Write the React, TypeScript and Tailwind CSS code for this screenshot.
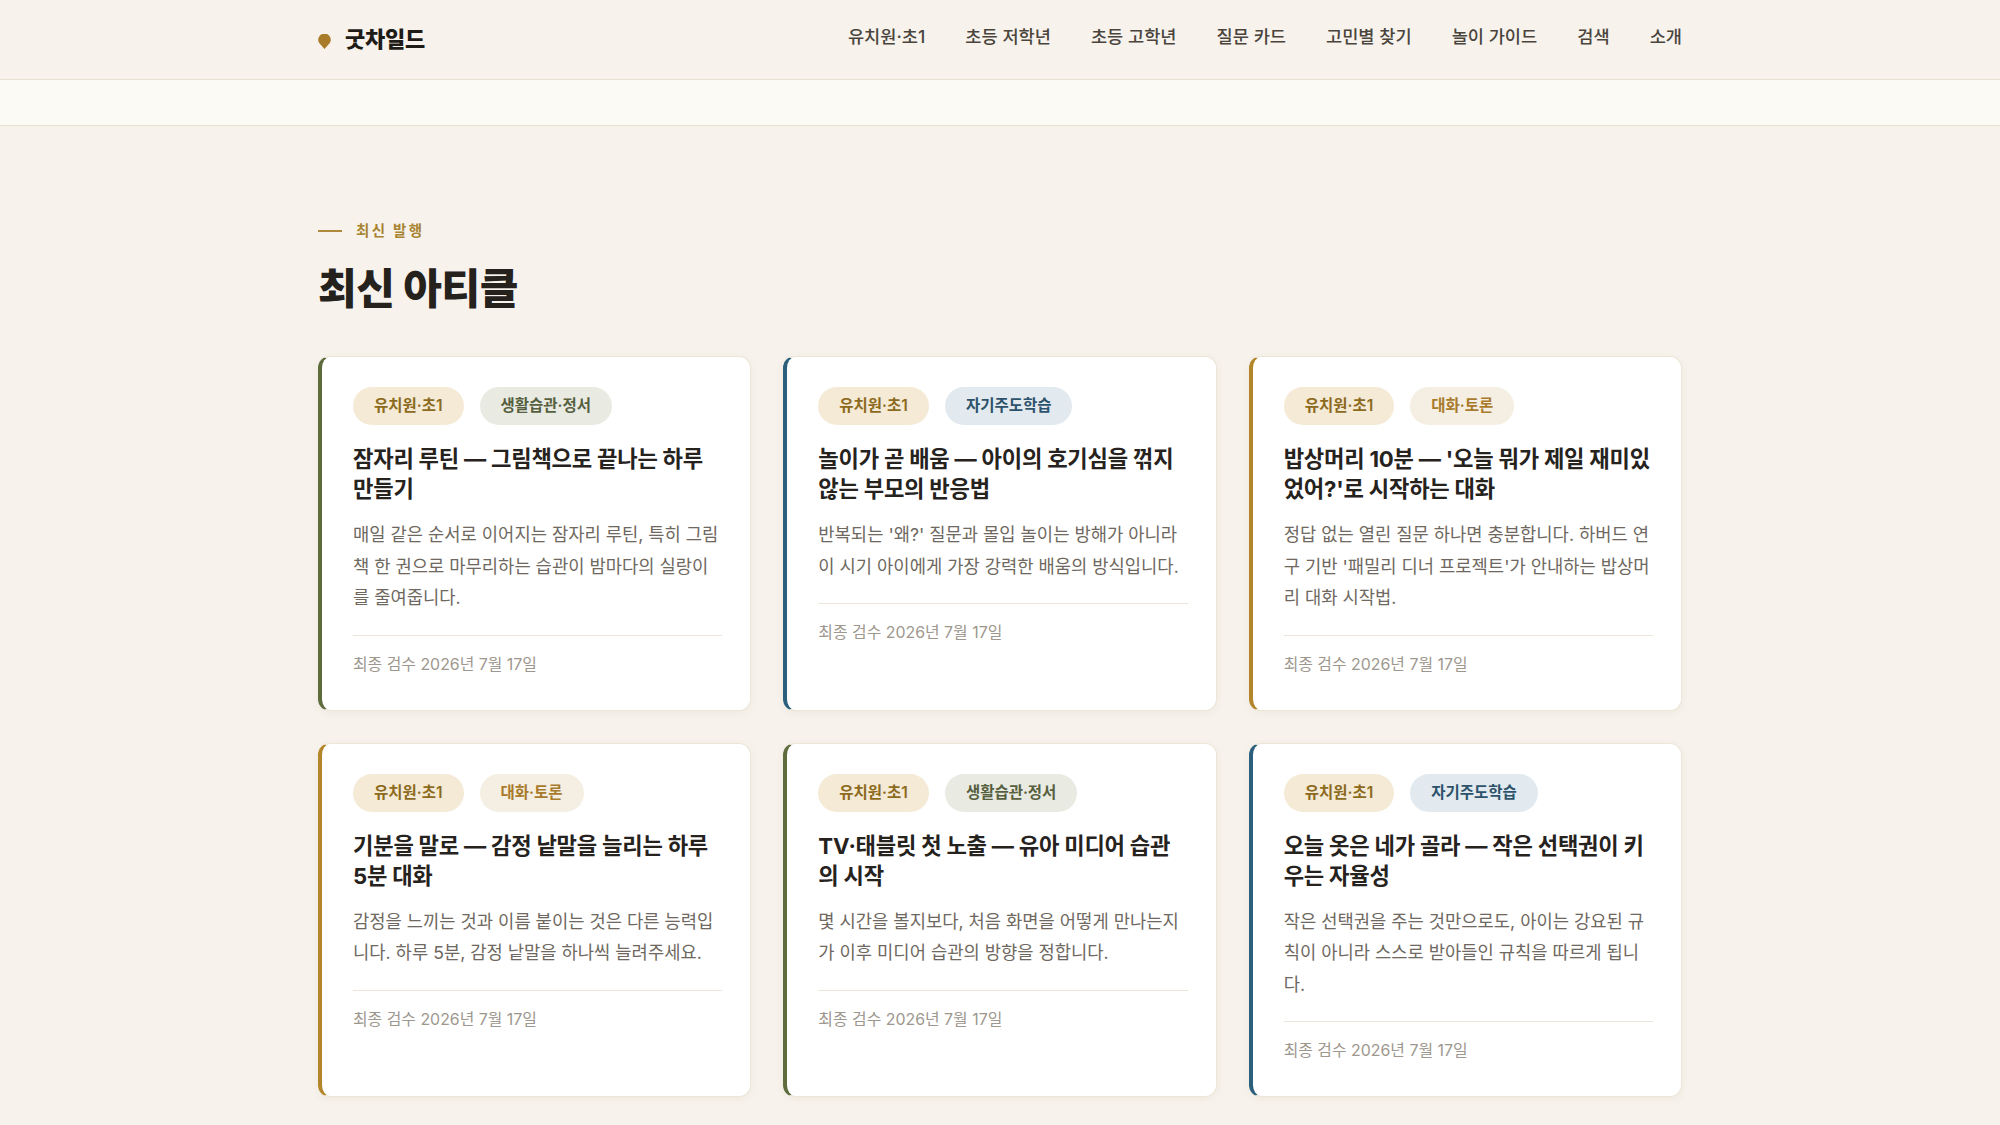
import React from 'react';

type Topic = 'habit' | 'self' | 'talk';

interface Article {
  topic: Topic;
  title: string;
  desc: string;
}

const topics: Record<Topic, { label: string; tag: string; edge: string }> = {
  habit: { label: '생활습관·정서', tag: 'bg-[#e9ebe3] text-[#56603f]', edge: 'border-l-[#5d6b3d]' },
  self: { label: '자기주도학습', tag: 'bg-[#e2eaef] text-[#2d526b]', edge: 'border-l-[#2c5f7c]' },
  talk: { label: '대화·토론', tag: 'bg-[#f5eee2] text-[#a87b2c]', edge: 'border-l-[#b3862c]' },
};

const articles: Article[] = [
  {
    topic: 'habit',
    title: '잠자리 루틴 — 그림책으로 끝나는 하루 만들기',
    desc: '매일 같은 순서로 이어지는 잠자리 루틴, 특히 그림책 한 권으로 마무리하는 습관이 밤마다의 실랑이를 줄여줍니다.',
  },
  {
    topic: 'self',
    title: '놀이가 곧 배움 — 아이의 호기심을 꺾지 않는 부모의 반응법',
    desc: "반복되는 '왜?' 질문과 몰입 놀이는 방해가 아니라 이 시기 아이에게 가장 강력한 배움의 방식입니다.",
  },
  {
    topic: 'talk',
    title: "밥상머리 10분 — '오늘 뭐가 제일 재미있었어?'로 시작하는 대화",
    desc: "정답 없는 열린 질문 하나면 충분합니다. 하버드 연구 기반 '패밀리 디너 프로젝트'가 안내하는 밥상머리 대화 시작법.",
  },
  {
    topic: 'talk',
    title: '기분을 말로 — 감정 낱말을 늘리는 하루 5분 대화',
    desc: '감정을 느끼는 것과 이름 붙이는 것은 다른 능력입니다. 하루 5분, 감정 낱말을 하나씩 늘려주세요.',
  },
  {
    topic: 'habit',
    title: 'TV·태블릿 첫 노출 — 유아 미디어 습관의 시작',
    desc: '몇 시간을 볼지보다, 처음 화면을 어떻게 만나는지가 이후 미디어 습관의 방향을 정합니다.',
  },
  {
    topic: 'self',
    title: '오늘 옷은 네가 골라 — 작은 선택권이 키우는 자율성',
    desc: '작은 선택권을 주는 것만으로도, 아이는 강요된 규칙이 아니라 스스로 받아들인 규칙을 따르게 됩니다.',
  },
];

const navItems = ['유치원·초1', '초등 저학년', '초등 고학년', '질문 카드', '고민별 찾기', '놀이 가이드', '검색', '소개'];

function ArticleCard({ article }: { article: Article }) {
  const t = topics[article.topic];
  return (
    <div
      className={`flex flex-col bg-white rounded-[12px] border border-[#ece5d8] border-l-4 ${t.edge} pl-[31px] pr-[28px] pt-[30px] pb-[35px] shadow-[0_2px_8px_rgba(80,60,20,0.06)]`}
    >
      <div className="flex gap-4">
        <span className="px-[21px] py-[9px] rounded-full bg-[#f4ead5] text-[#8c6a1e] text-[15.5px] leading-[20px] font-semibold">
          유치원·초1
        </span>
        <span className={`px-[21px] py-[9px] rounded-full text-[15.5px] leading-[20px] font-semibold ${t.tag}`}>
          {t.label}
        </span>
      </div>
      <h3 className="mt-[19px] text-[22.2px] leading-[30px] font-bold text-[#26221d] tracking-[-0.01em]">
        {article.title}
      </h3>
      <p className="mt-[15px] text-[17.7px] leading-[31.5px] text-[#6e6860]">{article.desc}</p>
      <div className="mt-[21px] border-t border-[#ebe5da] pt-[19px] text-[15.9px] leading-[20px] text-[#9d978e]">
        최종 검수 2026년 7월 17일
      </div>
    </div>
  );
}

export default function App() {
  return (
    <div className="min-h-screen bg-[#f7f3ec] font-['Inter','Noto_Sans_CJK_KR',sans-serif] text-[#26221d]">
      {/* Header */}
      <header className="h-20 border-b border-[#e7dfd0]">
        <div className="w-[1364px] mx-auto h-full flex items-center justify-between">
          <div className="flex items-center gap-[14px]">
            <svg width="13" height="15" viewBox="0 0 13 15" className="mt-[3px]">
              <path d="M6.5 15 L3.2 11.2 A6.3 6.3 0 1 1 9.8 11.2 Z" fill="#a97c2a" />
            </svg>
            <span className="text-[22px] font-extrabold tracking-[-0.01em] text-[#1f1c18]">굿차일드</span>
          </div>
          <nav className="flex items-center gap-10 -mt-[4px]">
            {navItems.map((n) => (
              <span key={n} className="text-[17.6px] font-medium text-[#4a443d]">
                {n}
              </span>
            ))}
          </nav>
        </div>
      </header>
      <div className="h-[46px] bg-[#fbfaf5] border-b border-[#e7dfd0]" />

      {/* Latest */}
      <main className="w-[1364px] mx-auto pt-[95px] pb-20">
        <div className="flex items-center gap-[14px]">
          <span className="w-6 h-[2px] bg-[#b08a3a]" />
          <span className="text-[14.5px] leading-[20px] font-bold tracking-[0.16em] text-[#a88332]">최신 발행</span>
        </div>
        <h2 className="mt-[23px] text-[42px] leading-[50px] font-extrabold tracking-[-0.01em] text-[#25211c]">
          최신 아티클
        </h2>
        <div className="mt-[42px] grid grid-cols-3 gap-8">
          {articles.map((a, i) => (
            <ArticleCard key={i} article={a} />
          ))}
        </div>
      </main>
    </div>
  );
}
